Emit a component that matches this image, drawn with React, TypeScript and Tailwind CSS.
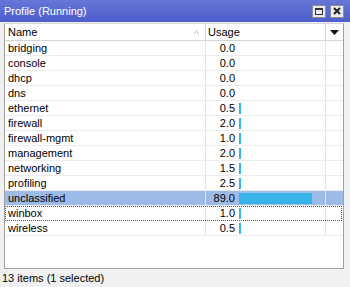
import React from "react";

const rows: [string, number][] = [
  ["bridging", 0.0],
  ["console", 0.0],
  ["dhcp", 0.0],
  ["dns", 0.0],
  ["ethernet", 0.5],
  ["firewall", 2.0],
  ["firewall-mgmt", 1.0],
  ["management", 2.0],
  ["networking", 1.5],
  ["profiling", 2.5],
  ["unclassified", 89.0],
  ["winbox", 1.0],
  ["wireless", 0.5],
];

export default function App() {
  return (
    <div className="w-[350px] h-[287px] bg-[#f0f0f0] flex flex-col overflow-hidden font-['Liberation_Sans',Arial,sans-serif] text-[11px] text-black">
      {/* title bar */}
      <div className="h-[22px] shrink-0 flex items-center pl-[4px] pr-[6px] bg-gradient-to-b from-[#6876d8] to-[#4d5dcb] text-white">
        <span className="text-[11px]">Profile (Running)</span>
        <div className="ml-auto flex gap-[4px]">
          <div className="w-[14px] h-[13px] bg-[#e9e9ec] border border-[#8c8c9c] flex items-center justify-center">
            <div className="w-[8px] h-[7px] border border-[#333] border-t-2" />
          </div>
          <div className="w-[14px] h-[13px] bg-[#e9e9ec] border border-[#8c8c9c] flex items-center justify-center">
            <svg width="8" height="8" viewBox="0 0 8 8">
              <path d="M1 1 L7 7 M7 1 L1 7" stroke="#222" strokeWidth="2" />
            </svg>
          </div>
        </div>
      </div>

      {/* table */}
      <div className="flex-1 flex pt-[1px] pl-[4px] pr-[6px] pb-[1px]">
        <div className="flex-1 bg-white border border-[#a0a0a0] border-t-[#d8d8d8] flex flex-col">
          <div className="h-[17px] flex border-b border-[#d5d5d5]">
            <div className="w-[201px] border-r border-[#d5d5d5] flex items-center pl-[3px] pr-[6px]">
              <span>Name</span>
              <svg className="ml-auto" width="5" height="5" viewBox="0 0 5 5">
                <path d="M0.5 4.5 L2.5 0.5 L4.5 4.5" stroke="#c4c4c4" fill="none" />
              </svg>
            </div>
            <div className="w-[120px] border-r border-[#d5d5d5] flex items-center pl-[2px]">
              Usage
            </div>
            <div className="flex-1 flex items-center justify-center">
              <svg width="9" height="5" viewBox="0 0 9 5">
                <path d="M0 0 L9 0 L4.5 5 Z" fill="#111" />
              </svg>
            </div>
          </div>
          {rows.map(([name, v]) => {
            const sel = name === "unclassified";
            const focus = name === "winbox";
            return (
              <div
                key={name}
                className={`h-[15px] flex ${sel ? "bg-[#9dbbe7]" : ""} ${
                  focus ? "outline outline-1 outline-dotted outline-[#555] -outline-offset-1 mr-[1px]" : "border-b border-[#ececec]"
                }`}
              >
                <div className="w-[201px] border-r border-[#e2e2e2] flex items-center pl-[3px]">{name}</div>
                <div className="w-[120px] border-r border-[#e2e2e2] flex items-center">
                  <span className="w-[29px] text-right">{v.toFixed(1)}</span>
                  {v > 0 && (
                    <div
                      className="ml-[4px] h-[11px] bg-[#38b4e8]"
                      style={{ width: Math.max(2, Math.round(v * 0.82)) }}
                    />
                  )}
                </div>
                <div className="flex-1" />
              </div>
            );
          })}
        </div>
      </div>

      {/* status bar */}
      <div className="h-[17px] shrink-0 flex items-center pl-[2px] bg-[#f0f0f0]">
        13 items (1 selected)
      </div>
    </div>
  );
}
